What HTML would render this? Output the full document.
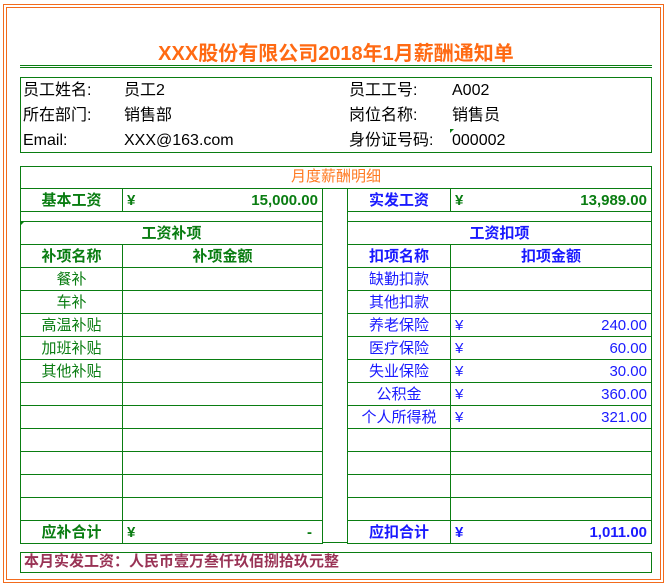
<!DOCTYPE html>
<html><head><meta charset="utf-8"><style>
*{margin:0;padding:0;box-sizing:border-box}
body{width:666px;height:584px;background:#fff;position:relative;overflow:hidden;font-family:"Liberation Sans","Noto Sans CJK SC",sans-serif;font-size:15px}
.a{position:absolute}
.o1{left:3px;top:4px;width:661px;height:579px;border:1px solid #f26b1d}
.o2{left:6px;top:7px;width:655px;height:573px;border:1px solid #f26b1d}
.title{left:0;width:672px;top:37px;text-align:center;color:#ff6a13;font-size:20px;font-weight:bold}
.gl{left:20px;width:632px;height:1px;background:#0a7d12}
.box{border:1px solid #0a7d12}
.info{font-size:16px;color:#000;line-height:25px}
table{position:absolute;border-collapse:collapse;table-layout:fixed}
td{border:1px solid #0a7d12;padding:0 4px;height:23px;white-space:nowrap;line-height:19px;overflow:hidden}
.g td{color:#0a7d12}
.b td{color:#1a1aff}
.c{text-align:center}
.bo{font-weight:bold}
.yen{display:flex;justify-content:space-between}
</style></head><body>
<div class="a o1"></div><div class="a o2"></div>
<div class="a title">XXX股份有限公司2018年1月薪酬通知单</div>
<div class="a gl" style="top:65px"></div><div class="a gl" style="top:67px"></div>

<div class="a box" style="left:20px;top:77px;width:632px;height:76px"></div>
<div class="a info" style="left:23px;top:78px">员工姓名:<br>所在部门:<br>Email:</div>
<div class="a info" style="left:124px;top:78px">员工2<br>销售部<br>XXX@163.com</div>
<div class="a info" style="left:349px;top:78px">员工工号:<br>岗位名称:<br>身份证号码:</div>
<div class="a info" style="left:452px;top:78px">A002<br>销售员<br>000002</div>
<div class="a" style="left:450px;top:129px;width:0;height:0;border-top:4px solid #0a7d12;border-right:4px solid transparent"></div>

<div class="a box" style="left:20px;top:166px;width:632px;height:23px;text-align:center;color:#ff7a22;line-height:20px">月度薪酬明细</div>

<table class="g" style="left:20px;top:188px;width:303px">
<col style="width:102px"><col>
<tr><td class="c bo">基本工资</td><td class="bo"><div class="yen"><span>¥</span><span>15,000.00</span></div></td></tr>
<tr style="height:10px"><td colspan="2" style="height:10px"></td></tr>
<tr><td colspan="2" class="c bo">工资补项</td></tr>
<tr><td class="c bo">补项名称</td><td class="c bo">补项金额</td></tr>
<tr><td class="c">餐补</td><td></td></tr>
<tr><td class="c">车补</td><td></td></tr>
<tr><td class="c">高温补贴</td><td></td></tr>
<tr><td class="c">加班补贴</td><td></td></tr>
<tr><td class="c">其他补贴</td><td></td></tr>
<tr><td></td><td></td></tr><tr><td></td><td></td></tr><tr><td></td><td></td></tr>
<tr><td></td><td></td></tr><tr><td></td><td></td></tr><tr><td></td><td></td></tr>
<tr><td class="c bo">应补合计</td><td class="bo"><div class="yen"><span>¥</span><span style="margin-right:6px">-</span></div></td></tr>
</table>
<div class="a" style="left:20px;top:222px;width:0;height:0;border-top:4px solid #0a7d12;border-right:4px solid transparent"></div>

<table class="b" style="left:347px;top:188px;width:305px">
<col style="width:103px"><col>
<tr><td class="c bo">实发工资</td><td class="bo" style="color:#0a7d12"><div class="yen"><span>¥</span><span>13,989.00</span></div></td></tr>
<tr style="height:10px"><td colspan="2" style="height:10px"></td></tr>
<tr><td colspan="2" class="c bo">工资扣项</td></tr>
<tr><td class="c bo">扣项名称</td><td class="c bo">扣项金额</td></tr>
<tr><td class="c">缺勤扣款</td><td></td></tr>
<tr><td class="c">其他扣款</td><td></td></tr>
<tr><td class="c">养老保险</td><td><div class="yen"><span>¥</span><span>240.00</span></div></td></tr>
<tr><td class="c">医疗保险</td><td><div class="yen"><span>¥</span><span>60.00</span></div></td></tr>
<tr><td class="c">失业保险</td><td><div class="yen"><span>¥</span><span>30.00</span></div></td></tr>
<tr><td class="c">公积金</td><td><div class="yen"><span>¥</span><span>360.00</span></div></td></tr>
<tr><td class="c">个人所得税</td><td><div class="yen"><span>¥</span><span>321.00</span></div></td></tr>
<tr><td></td><td></td></tr><tr><td></td><td></td></tr><tr><td></td><td></td></tr><tr><td></td><td></td></tr>
<tr><td class="c bo">应扣合计</td><td class="bo"><div class="yen"><span>¥</span><span>1,011.00</span></div></td></tr>
</table>
<div class="a" style="left:323px;top:542px;width:24px;height:1px;background:#0a7d12"></div>

<div class="a box" style="left:20px;top:552px;width:632px;height:21px;color:#993355;font-weight:bold;padding-left:3px;line-height:18px">本月实发工资：人民币壹万叁仟玖佰捌拾玖元整</div>
</body></html>
